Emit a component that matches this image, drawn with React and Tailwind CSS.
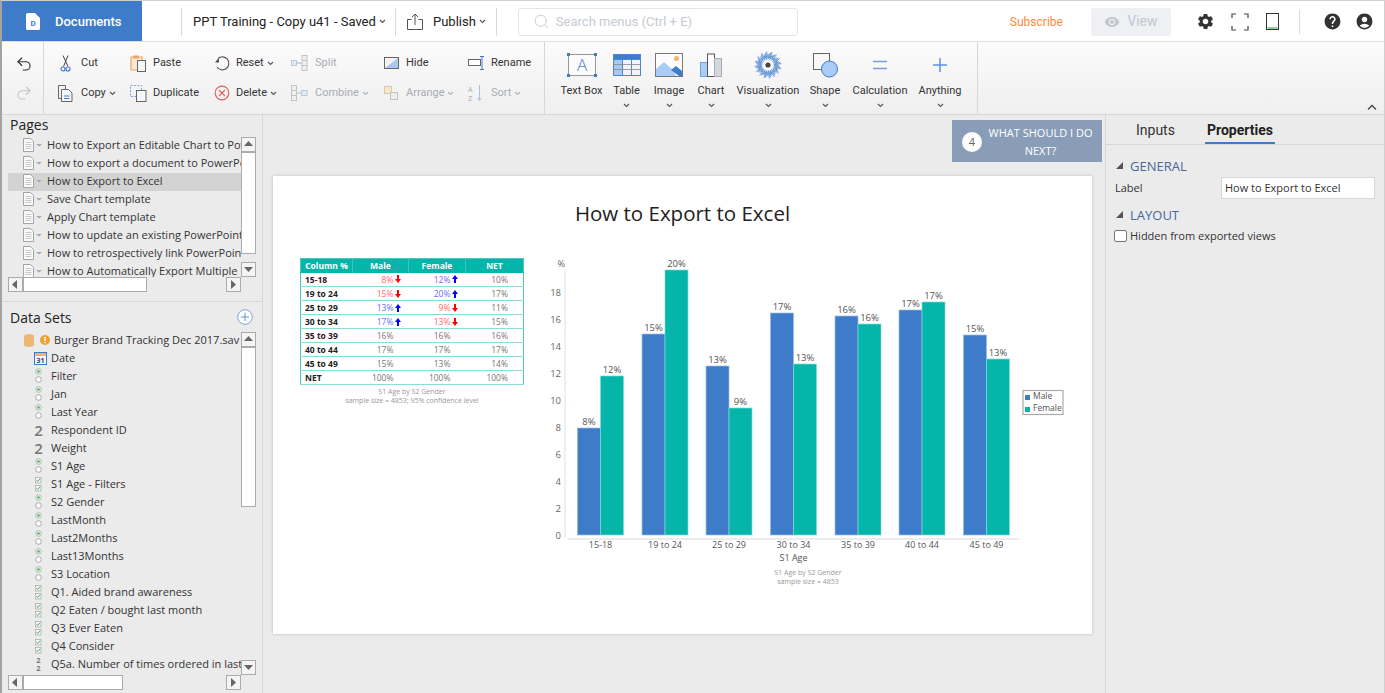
import React from 'react';
import { Undo2, Redo2, Search } from 'lucide-react';
import { MdSettings, MdHelp, MdAccountCircle, MdRemoveRedEye } from 'react-icons/md';

const Caret = ({ color = '#555' }) => (
  <svg width="7" height="5" viewBox="0 0 7 5" className="shrink-0"><path d="M1 1l2.5 2.5L6 1" fill="none" stroke={color} strokeWidth="1.1" /></svg>
);

const I = ({ w = 20, h = 20, children }) => <svg width={w} height={h} viewBox={`0 0 ${w} ${h}`} className="shrink-0">{children}</svg>;

const CutIcon = () => <I w={14} h={17}><path d="M6 0.500l5 11M11 0.500L6.500 11.500" stroke="#444" strokeWidth="1" fill="none"/><circle cx="6" cy="14" r="2" fill="none" stroke="#3e7cca" strokeWidth="1.200"/><circle cx="11" cy="14" r="2" fill="none" stroke="#3e7cca" strokeWidth="1.200"/></I>;
const PasteIcon = () => <I w={17} h={17}><path d="M1 2h11v13H1z" fill="#fbe9d3" stroke="#e9a868" strokeWidth="1.200"/><rect x="3" y="0.500" width="6" height="3" fill="#e9a868"/><rect x="7.500" y="5.500" width="8" height="11" fill="#f6f6f6" stroke="#666"/></I>;
const CopyIcon = () => <I w={17} h={17}><path d="M4 13.500H1.500V0.500h7V4" fill="none" stroke="#666"/><path d="M4.500 4.500h7l3.500 3.500v8.500H4.500z" fill="#f8f8f8" stroke="#666"/><path d="M7 11h5.500M7 13.500h5.500" stroke="#3e7cca"/></I>;
const DupIcon = () => <I w={17} h={17}><rect x="0.500" y="0.500" width="11" height="11" fill="none" stroke="#7aa6dc" strokeDasharray="2 1.400"/><rect x="6.500" y="5.500" width="9.500" height="11" fill="#f6f6f6" stroke="#666"/></I>;
const ResetIcon = () => <I w={16} h={16}><path d="M4 3.500A6.500 6.500 0 1 1 3 12" fill="none" stroke="#555" strokeWidth="1.100"/><path d="M1 7.500L5 2.500v5z" fill="#555"/></I>;
const DelIcon = () => <I w={16} h={16}><circle cx="8" cy="8" r="6.800" fill="none" stroke="#e0615c" strokeWidth="1.200"/><path d="M5 5l6 6M11 5l-6 6" stroke="#e0615c" strokeWidth="1.100"/></I>;
const SplitIcon = () => <I w={17} h={16}><rect x="0.500" y="5.500" width="5" height="5" fill="#e3eaf3" stroke="#b9cbe2"/><path d="M5 8h6" stroke="#9ab6d8"/><rect x="11" y="0.500" width="5" height="15" fill="#f0f0f0" stroke="#c4c4c4"/><path d="M11 5.500h5M11 10.500h5" stroke="#c4c4c4"/></I>;
const CombineIcon = () => <I w={17} h={16}><rect x="0.500" y="0.500" width="5" height="15" fill="#f0f0f0" stroke="#c4c4c4"/><path d="M0.500 5.500h5M0.500 10.500h5M5 8h6" stroke="#c4c4c4"/><rect x="10.500" y="5.500" width="5.500" height="5" fill="#e3eaf3" stroke="#b9cbe2"/></I>;
const HideIcon = () => <I w={15} h={12}><rect x="0.500" y="0.500" width="14" height="11" fill="#f4f4f4" stroke="#666"/><path d="M1 11L14 1v10z" fill="#a9c8f1"/></I>;
const RenameIcon = () => <I w={17} h={14}><rect x="0.500" y="3.500" width="12" height="6" fill="#fff" stroke="#666"/><path d="M12 0.500h4M14 0.500v13M12 13.500h4" stroke="#3e7cca" fill="none"/></I>;
const ArrangeIcon = () => <I w={14} h={14}><rect x="0.500" y="0.500" width="7" height="7" fill="#f7e6cc" stroke="#dcc9a8"/><rect x="6.500" y="6.500" width="7" height="7" fill="#eee" stroke="#c4c4c4"/></I>;
const SortIcon = () => <I w={16} h={18}><text x="0" y="8" fontSize="7" fill="#aaa" fontFamily="Roboto">A</text><text x="0" y="17" fontSize="7" fill="#aaa" fontFamily="Roboto">Z</text><path d="M11.500 1v15M9.500 14l2 2.500 2-2.500" stroke="#a9c0de" fill="none"/></I>;

const ribbonCols = [
  { w: 'w-[73px]', s: 'w-[24px]', items: [
    { l: 'Cut', i: <CutIcon /> }, { l: 'Copy', i: <CopyIcon />, c: 1 } ] },
  { w: 'w-[84px]', s: 'w-[23px]', items: [
    { l: 'Paste', i: <PasteIcon /> }, { l: 'Duplicate', i: <DupIcon /> } ] },
  { w: 'w-[77px]', s: 'w-[22px]', items: [
    { l: 'Reset', i: <ResetIcon />, c: 1 }, { l: 'Delete', i: <DelIcon />, c: 1 } ] },
  { w: 'w-[93px]', s: 'w-[24px]', items: [
    { l: 'Split', i: <SplitIcon />, d: 1 }, { l: 'Combine', i: <CombineIcon />, d: 1, c: 1 } ] },
  { w: 'w-[84px]', s: 'w-[22px]', items: [
    { l: 'Hide', i: <HideIcon /> }, { l: 'Arrange', i: <ArrangeIcon />, d: 1, c: 1 } ] },
  { w: 'w-[76px]', s: 'w-[23px]', items: [
    { l: 'Rename', i: <RenameIcon /> }, { l: 'Sort', i: <SortIcon />, d: 1, c: 1 } ] },
];

const burst = Array.from({ length: 64 }, (_, k) => {
  const a = (k / 64) * Math.PI * 2;
  const r1 = 5.500 + ((k * 7) % 3);
  const r2 = 10.500 + ((k * 5) % 4);
  return <line key={k} x1={14 + r1 * Math.cos(a)} y1={14 + r1 * Math.sin(a)} x2={14 + r2 * Math.cos(a)} y2={14 + r2 * Math.sin(a)} stroke="#3f7fd0" strokeWidth="0.800" />;
});

const inserts = [
  { l: 'Text Box', w: 'w-[47px]', i: (
    <I w={30} h={24}><rect x="1.500" y="1.500" width="27" height="21" fill="#fbfbfb" stroke="#999"/><text x="15" y="18" fontSize="17" textAnchor="middle" fill="#4a86d4" fontFamily="Open Sans" fontWeight="300">A</text>{[[0,0],[27,0],[0,21],[27,21]].map(([x,y],k)=><rect key={k} x={x} y={y} width="3" height="3" fill="#3e7cca"/>)}</I>) },
  { l: 'Table', w: 'w-[43px]', c: 1, i: (
    <I w={28} h={22}><rect width="28" height="22" fill="#4a86d4"/><rect x="1" y="1" width="26" height="4" fill="#3e7cca"/><rect x="1" y="6" width="8" height="15" fill="#a9c8f1"/><rect x="10" y="6" width="8" height="15" fill="#f3f3f3"/><rect x="19" y="6" width="8" height="15" fill="#f3f3f3"/><path d="M1 10.500h26M1 15.500h26" stroke="#888" strokeWidth="0.800"/></I>) },
  { l: 'Image', w: 'w-[42px]', c: 1, i: (
    <I w={28} h={24}><rect x="0.500" y="0.500" width="27" height="23" fill="#fdfdfd" stroke="#777"/><path d="M1 23V16l8-7 9 8 3 6z" fill="#a9cdf6"/><path d="M16 17l5-4 6 5v5h-3z" fill="#3e7cca"/><circle cx="21.500" cy="5.500" r="2.500" fill="#f3b36a"/></I>) },
  { l: 'Chart', w: 'w-[42px]', c: 1, i: (
    <I w={22} h={24}><rect x="0.500" y="9.500" width="7" height="14" fill="#a9cdf6" stroke="#6fa2e0"/><rect x="7.500" y="1" width="7" height="22.500" fill="#fff" stroke="#555"/><rect x="14.500" y="5.500" width="7" height="18" fill="#d3d8da" stroke="#aab"/></I>) },
  { l: 'Visualization', w: 'w-[72px]', c: 1, i: (
    <I w={28} h={28}>{burst}<ellipse cx="14" cy="14" rx="5.500" ry="4" fill="#fff"/><circle cx="14" cy="14" r="2.600" fill="#444"/></I>) },
  { l: 'Shape', w: 'w-[42px]', c: 1, i: (
    <I w={25} h={25}><rect x="0.500" y="0.500" width="16" height="16" fill="#f8f8f8" stroke="#666"/><circle cx="16.500" cy="16" r="8" fill="#a9cdf6" stroke="#3e7cca"/></I>) },
  { l: 'Calculation', w: 'w-[68px]', c: 1, i: (
    <I w={14} h={10}><path d="M0 1.500h14M0 8.500h14" stroke="#6fa2e0" strokeWidth="1.500"/></I>) },
  { l: 'Anything', w: 'w-[52px]', c: 1, i: (
    <I w={14} h={14}><path d="M0 7h14M7 0v14" stroke="#5b92da" strokeWidth="1.500"/></I>) },
];

const pages = ['How to Export an Editable Chart to PowerPoint', 'How to export a document to PowerPoint', 'How to Export to Excel', 'Save Chart template', 'Apply Chart template', 'How to update an existing PowerPoint document', 'How to retrospectively link PowerPoint', 'How to Automatically Export Multiple Pages'];

const RadioI = () => <I w={9} h={16}><circle cx="4.500" cy="3.500" r="2.800" fill="#eef5ee" stroke="#9db09d" strokeWidth="0.800"/><circle cx="4.500" cy="3.500" r="1.300" fill="#4fae6a"/><circle cx="4.500" cy="11.500" r="2.800" fill="#fff" stroke="#a8a8a8"/></I>;
const CheckI = () => <I w={9} h={16}><rect x="1.500" y="1.500" width="5.500" height="5.500" fill="#f4f4f4" stroke="#a8b4a8" strokeWidth="0.800"/><path d="M2.500 4.200l1.200 1.300 2.500-2.800" stroke="#3fa95c" strokeWidth="0.900" fill="none"/><rect x="1.500" y="9.500" width="5.500" height="5.500" fill="#f4f4f4" stroke="#a8b4a8" strokeWidth="0.800"/><path d="M2.500 12.200l1.200 1.300 2.500-2.800" stroke="#3fa95c" strokeWidth="0.900" fill="none"/></I>;
const NumI = () => <span className="w-[9px] text-[15px] leading-none font-semibold text-[#777] text-center">2</span>;
const Num2I = () => <span className="w-[9px] flex flex-col items-center text-[7.500px] leading-[8px] font-bold text-[#777]"><span>2</span><span>2</span></span>;
const DateI = () => <I w={13} h={14}><rect x="0.500" y="1.500" width="12" height="12" fill="#f5f8fc" stroke="#3e7cca"/><rect x="1" y="2" width="11" height="3" fill="#e6b873"/><text x="6.500" y="12" fontSize="7" textAnchor="middle" fontWeight="700" fill="#444" fontFamily="Open Sans">31</text></I>;

const vars = [
  ['Date', 'd'], ['Filter', 'r'], ['Jan', 'r'], ['Last Year', 'r'], ['Respondent ID', 'n'], ['Weight', 'n'], ['S1 Age', 'r'], ['S1 Age - Filters', 'c'], ['S2 Gender', 'r'], ['LastMonth', 'r'], ['Last2Months', 'r'], ['Last13Months', 'r'], ['S3 Location', 'r'], ['Q1. Aided brand awareness', 'c'], ['Q2 Eaten / bought last month', 'c'], ['Q3 Ever Eaten', 'c'], ['Q4 Consider', 'c'], ['Q5a. Number of times ordered in last month', 'm'],
];
const varIcon = { d: <DateI />, r: <RadioI />, n: <NumI />, c: <CheckI />, m: <Num2I /> };

const Btn = ({ dir }) => {
  const path = { up: 'M1 7l4.500-5L10 7z', down: 'M1 3l4.500 5L10 3z', left: 'M7 1L2 5.500 7 10z', right: 'M3 1l5 4.500L3 10z' }[dir];
  return (
    <div className="w-[15px] h-[15px] shrink-0 border border-[#ababab] bg-[#f4f4f4] flex items-center justify-center">
      <svg width="11" height="11" viewBox="0 0 11 11"><path d={path} fill="#666" /></svg>
    </div>
  );
};

const DocI = () => (
  <svg width="20" height="14" viewBox="0 0 20 14" className="shrink-0 overflow-visible">
    <path d="M0.500 0.500h7l3 3v10h-10z" fill="#fafafa" stroke="#a5a5a5" />
    <path d="M2.500 4.500h6M2.500 6.500h6M2.500 8.500h6M2.500 10.500h6" stroke="#bbb" strokeWidth="0.800" />
    <path d="M13 6h6l-3 2.500z" fill="#aaa" />
  </svg>
);

const bars = [
  { x: 577.500, m: 428, f: 376, lm: '8%', lf: '12%', c: '15-18' },
  { x: 642, m: 334, f: 270, lm: '15%', lf: '20%', c: '19 to 24' },
  { x: 706, m: 366, f: 408, lm: '13%', lf: '9%', c: '25 to 29' },
  { x: 770.500, m: 313, f: 364, lm: '17%', lf: '13%', c: '30 to 34' },
  { x: 835, m: 316, f: 324, lm: '16%', lf: '16%', c: '35 to 39' },
  { x: 899, m: 310, f: 302, lm: '17%', lf: '17%', c: '40 to 44' },
  { x: 963.500, m: 335, f: 359, lm: '15%', lf: '13%', c: '45 to 49' },
];

const Chart = () => (
  <svg width="530" height="340" viewBox="540 250 530 340" className="shrink-0 ml-[16px]" fontFamily="Open Sans">
    <path d="M565 270v268" stroke="#eaeaea" strokeWidth="1.500" />
    <path d="M568 539h451" stroke="#e6e6e6" strokeWidth="1.500" />
    <text x="565" y="266.500" fontSize="9" fill="#666" textAnchor="end">%</text>
    {[0, 2, 4, 6, 8, 10, 12, 14, 16, 18].map((v) => (
      <text key={v} x="561" y={538.500 - v * 13.450} fontSize="9.500" fill="#666" textAnchor="end">{v}</text>
    ))}
    {bars.map((b) => (
      <g key={b.c}>
        <rect x={b.x} y={b.m} width="23" height={535 - b.m} fill="#3e7cca" stroke="#9dbde6" strokeWidth="0.700" />
        <rect x={b.x + 23} y={b.f} width="23" height={535 - b.f} fill="#05b5aa" stroke="#7edcd5" strokeWidth="0.700" />
        <text x={b.x + 11.500} y={b.m - 3.500} fontSize="9.500" fill="#555" textAnchor="middle">{b.lm}</text>
        <text x={b.x + 34.500} y={b.f - 3.500} fontSize="9.500" fill="#555" textAnchor="middle">{b.lf}</text>
        <text x={b.x + 23} y="547.500" fontSize="9" fill="#555" textAnchor="middle">{b.c}</text>
      </g>
    ))}
    <text x="793.500" y="560.500" fontSize="9" fill="#555" textAnchor="middle">S1 Age</text>
    <text x="808" y="574.500" fontSize="7" fill="#999" textAnchor="middle">S1 Age by S2 Gender</text>
    <text x="808" y="583.500" fontSize="7" fill="#999" textAnchor="middle">sample size = 4853</text>
    <rect x="1023" y="390.500" width="40" height="24" fill="#fff" stroke="#aaa" strokeWidth="1.200" />
    <rect x="1025" y="395" width="5" height="5" fill="#3e7cca" />
    <rect x="1025" y="407" width="5" height="5" fill="#05b5aa" />
    <text x="1033" y="399" fontSize="8.500" fill="#555">Male</text>
    <text x="1033" y="411" fontSize="8.500" fill="#555">Female</text>
  </svg>
);

const Arrow = ({ up }) => (
  <svg width="6" height="8" viewBox="0 0 6 8" className="ml-[1px]">
    <path d={up ? 'M3 0l3 4H4v4H2V4H0z' : 'M3 8l3-4H4V0H2v4H0z'} fill={up ? '#0000ff' : '#ff0000'} />
  </svg>
);

const Cell = ({ v, a }) => (
  <td className="p-0">
    <div className={`flex justify-end items-center ${a === 'u' ? 'text-[#6a6aff]' : a === 'd' ? 'text-[#ff6a6a]' : 'text-[#777]'}`}>
      <span>{v}</span>
      <span className="w-[15px] flex items-center">{a && <Arrow up={a === 'u'} />}</span>
    </div>
  </td>
);

const rows = [
  ['15-18', ['8%', 'd'], ['12%', 'u'], ['10%']],
  ['19 to 24', ['15%', 'd'], ['20%', 'u'], ['17%']],
  ['25 to 29', ['13%', 'u'], ['9%', 'd'], ['11%']],
  ['30 to 34', ['17%', 'u'], ['13%', 'd'], ['15%']],
  ['35 to 39', ['16%'], ['16%'], ['16%']],
  ['40 to 44', ['17%'], ['17%'], ['17%']],
  ['45 to 49', ['15%'], ['13%'], ['14%']],
  ['NET', ['100%'], ['100%'], ['100%']],
];

const DataTable = () => (
  <div className="w-[224px] shrink-0 mt-[8px] font-['Open_Sans',sans-serif]">
    <table className="w-[223px] table-fixed border-collapse border border-[#4cc6be] text-[8.500px] leading-[13px]">
      <colgroup><col className="w-[52px]" /><col className="w-[56px]" /><col className="w-[57px]" /><col className="w-[58px]" /></colgroup>
      <thead>
        <tr className="h-[14px] bg-[#05b5aa] text-white font-bold">
          <th className="p-0 border-r border-[#3cc4bb] font-bold">Column %</th>
          <th className="p-0 border-r border-[#3cc4bb] font-bold">Male</th>
          <th className="p-0 border-r border-[#3cc4bb] font-bold">Female</th>
          <th className="p-0 font-bold">NET</th>
        </tr>
      </thead>
      <tbody>
        {rows.map((r) => (
          <tr key={r[0]} className="h-[14px] border-b border-[#8adcd5] bg-white">
            <td className="p-0 pl-[4px] font-bold text-[#222]">{r[0]}</td>
            <Cell v={r[1][0]} a={r[1][1]} />
            <Cell v={r[2][0]} a={r[2][1]} />
            <Cell v={r[3][0]} a={r[3][1]} />
          </tr>
        ))}
      </tbody>
    </table>
    <div className="text-center text-[7px] leading-[9px] text-[#999] mt-[2px]">
      <div>S1 Age by S2 Gender</div>
      <div>sample size = 4853; 95% confidence level</div>
    </div>
  </div>
);

export default function App() {
  return (
    <div className="w-[1385px] h-[693px] overflow-hidden flex flex-col border-t border-t-[#cfcfcf] border-l-2 border-l-[#a3a3a3] border-r border-r-[#cfcfcf] bg-white font-['Roboto',sans-serif] text-[#222]">
      <header className="h-[41px] shrink-0 flex items-center border-b border-[#dcdfe0] bg-white pt-[1px]">
        <div className="w-[140px] -mt-[1px] h-[40px] bg-[#3e7cca] flex items-center pl-[24px] pt-[1px] text-white text-[13px] font-medium">
          <svg width="14" height="17" viewBox="0 0 14 17" className="mr-[15px]"><path d="M0 1.500A1.500 1.500 0 0 1 1.500 0H9l5 5v10.500a1.500 1.500 0 0 1-1.500 1.500h-11A1.500 1.500 0 0 1 0 15.500z" fill="#fff" /><text x="7" y="13" fontSize="8" fontWeight="700" fill="#3e7cca" textAnchor="middle" fontFamily="Roboto">D</text></svg>
          Documents
        </div>
        <div className="w-px h-[28px] bg-[#d9d9d9] ml-[39px]" />
        <div className="ml-[11px] w-[202px] flex items-center gap-[3px] text-[13px]">PPT Training - Copy u41 - Saved <Caret /></div>
        <div className="w-px h-[28px] bg-[#d9d9d9]" />
        <svg width="16" height="17" viewBox="0 0 16 17" className="ml-[11px]"><path d="M4.500 6.500h-4v10h15v-10h-4" fill="none" stroke="#555" /><path d="M8 12V1M5 4l3-3 3 3" fill="none" stroke="#555" /></svg>
        <span className="ml-[10px] text-[13px]">Publish</span>
        <span className="ml-[3px]"><Caret /></span>
        <div className="w-px h-[28px] bg-[#d9d9d9] ml-[10px]" />
        <div className="ml-[21px] w-[280px] h-[28px] border border-[#e4e6ec] rounded-[3px] flex items-center pl-[14px] gap-[6px] text-[13px] text-[#c6cad3]">
          <Search size={17} strokeWidth={1.300} />Search menus (Ctrl + E)
        </div>
        <span className="ml-[212px] text-[12px] text-[#ff8a3d]">Subscribe</span>
        <div className="ml-[28px] w-[80px] h-[28px] rounded-[3px] bg-[#eff0f4] flex items-center justify-center gap-[7px] text-[14px] text-[#c2c7d1]">
          <MdRemoveRedEye size={16} />View
        </div>
        <MdSettings size={19} className="ml-[25px] text-[#333]" />
        <svg width="18" height="18" viewBox="0 0 18 18" className="ml-[16px]"><path d="M1 5V1h4M13 1h4v4M17 13v4h-4M5 17H1v-4" fill="none" stroke="#444" strokeWidth="1.200" /></svg>
        <svg width="13" height="17" viewBox="0 0 13 17" className="ml-[17px]"><rect x="0.500" y="0.500" width="12" height="16" fill="none" stroke="#333" /><path d="M1.500 15h10" stroke="#3fb34f" strokeWidth="1.200" /></svg>
        <div className="w-px h-[24px] bg-[#d9d9d9] ml-[20px]" />
        <MdHelp size={19} className="ml-[23px] text-[#333]" />
        <MdAccountCircle size={19} className="ml-[13px] text-[#333]" />
      </header>

      <div className="h-[73px] shrink-0 flex border-b border-[#d5d8d8] bg-linear-to-b from-[#fdfbfc] to-[#efefef] relative">
        <div className="w-[42px] shrink-0 border-r border-[#d5d8d8] flex flex-col items-center pt-[13px] gap-[11px] pl-[2px]">
          <Undo2 size={18} strokeWidth={1.500} className="text-[#333]" />
          <Redo2 size={18} strokeWidth={1.500} className="text-[#c4c4c4]" />
        </div>
        <div className="w-[501px] shrink-0 border-r border-[#d5d8d8] flex pl-[13px] pt-[6px] text-[11px]">
          {ribbonCols.map((col, k) => (
            <div key={k} className={`${col.w} shrink-0 flex flex-col`}>
              {col.items.map((it) => (
                <div key={it.l} className={`h-[30px] flex items-center ${it.d ? 'text-[#a9adb3]' : 'text-[#333]'}`}>
                  <span className={`${col.s} shrink-0 flex items-center`}>{it.i}</span>
                  <span>{it.l}</span>
                  {it.c && <span className="ml-[3px]"><Caret color={it.d ? '#b5b5b5' : '#555'} /></span>}
                </div>
              ))}
            </div>
          ))}
        </div>
        <div className="w-[433px] shrink-0 border-r border-[#d5d8d8] flex pl-[13px] pt-[9px] text-[11px] text-[#333]">
          {inserts.map((it) => (
            <div key={it.l} className={`${it.w} shrink-0 flex flex-col items-center`}>
              <div className="h-[28px] flex items-center justify-center">{it.i}</div>
              <div className="h-[16px] mt-[4px] leading-[16px] whitespace-nowrap">{it.l}</div>
              <div className="h-[12px] flex items-center justify-center">{it.c && <Caret />}</div>
            </div>
          ))}
        </div>
        <svg width="10" height="7" viewBox="0 0 10 7" className="absolute right-[7px] bottom-[3px]"><path d="M1 5.500L5 1.500 9 5.500" fill="none" stroke="#444" strokeWidth="1.300" /></svg>
      </div>

      <main className="flex-1 min-h-0 flex bg-[#ebebeb] font-['Open_Sans',sans-serif]">
        <aside className="w-[261px] shrink-0 border-r border-[#d5d8d8] flex flex-col text-[11px] text-[#333]">
          <div className="h-[187px] shrink-0 border-b border-[#d8d8d8] pl-[6px]">
            <div className="h-[22px] pl-[2px] text-[14px] leading-[20px] text-[#222]">Pages</div>
            <div className="flex">
              <div className="w-[233px] h-[140px] overflow-hidden">
                {pages.map((p, k) => (
                  <div key={p} className={`h-[18px] flex items-center pl-[15px] pb-[2px] gap-[4px] whitespace-nowrap overflow-hidden ${k === 2 ? 'bg-[#d3d3d3]' : ''}`}>
                    <DocI /><span>{p}</span>
                  </div>
                ))}
              </div>
              <div className="w-[15px] h-[140px] flex flex-col">
                <Btn dir="up" />
                <div className="h-[102px] bg-white border border-[#ababab]" />
                <div className="flex-1" />
                <Btn dir="down" />
              </div>
            </div>
            <div className="flex w-[233px]">
              <Btn dir="left" />
              <div className="w-[124px] bg-white border border-[#ababab]" />
              <div className="flex-1" />
              <Btn dir="right" />
            </div>
          </div>
          <div className="flex-1 pl-[6px]">
            <div className="h-[30px] flex items-center justify-between pr-[9px] pl-[2px] text-[14px] text-[#222]">
              <span>Data Sets</span>
              <svg width="16" height="16" viewBox="0 0 16 16"><circle cx="8" cy="8" r="7.300" fill="#fff" stroke="#7aa6dc" /><path d="M4 8h8M8 4v8" stroke="#5b92da" /></svg>
            </div>
            <div className="flex">
              <div className="w-[233px] h-[343px] overflow-hidden">
                <div className="h-[18px] flex items-center pl-[16px] pb-[2px] whitespace-nowrap">
                  <svg width="10" height="13" viewBox="0 0 10 13"><path d="M0 2c0-2.500 10-2.500 10 0v9c0 2.500-10 2.500-10 0z" fill="#ecb673" /></svg>
                  <svg width="10" height="10" viewBox="0 0 10 10" className="ml-[6px]"><circle cx="5" cy="5" r="5" fill="#eda232" /><path d="M5 2v4M5 7v1.300" stroke="#fff" strokeWidth="1.400" /></svg>
                  <span className="ml-[4px]">Burger Brand Tracking Dec 2017.sav</span>
                </div>
                {vars.map(([l, t]) => (
                  <div key={l} className="h-[18px] flex items-center pb-[2px] whitespace-nowrap overflow-hidden pl-[26px]">
                    <span className="w-[17px] shrink-0 flex justify-start">{varIcon[t]}</span>
                    <span>{l}</span>
                  </div>
                ))}
              </div>
              <div className="w-[15px] h-[343px] flex flex-col">
                <Btn dir="up" />
                <div className="h-[160px] bg-white border border-[#ababab]" />
                <div className="flex-1" />
                <Btn dir="down" />
              </div>
            </div>
            <div className="flex w-[233px]">
              <Btn dir="left" />
              <div className="w-[100px] bg-white border border-[#ababab]" />
              <div className="flex-1" />
              <Btn dir="right" />
            </div>
          </div>
        </aside>

        <section className="w-[843px] shrink-0 border-r border-[#d3d8d8] pt-[5px] flex flex-col">
          <div className="flex justify-end pr-[3px]">
            <div className="w-[150px] h-[42px] bg-[#8a9db8] flex items-center pl-[10px] pt-[1px] text-white text-[11px] leading-[18px]">
              <span className="w-[20px] h-[20px] rounded-full bg-white text-[#666] text-[11px] flex items-center justify-center shrink-0">4</span>
              <span className="flex-1 text-center pr-[3px]">WHAT SHOULD I DO NEXT?</span>
            </div>
          </div>
          <div className="mt-[14px] ml-[10px] w-[819px] h-[458px] bg-white shadow-[0_0_3px_rgba(0,0,0,0.2)]">
            <div className="pt-[23px] h-[52px] text-center text-[20.500px] leading-[28px] text-[#222]">How to Export to Excel</div>
            <div className="flex items-start mt-[22px] ml-[27px]">
              <DataTable />
              <Chart />
            </div>
          </div>
        </section>

        <aside className="flex-1 min-w-0 text-[11px] text-[#333]">
          <div className="h-[30px] border-b border-[#d3d8d8] flex items-end pl-[30px] font-['Roboto',sans-serif] text-[14px]">
            <span className="h-[30px] leading-[32px] text-[#333]">Inputs</span>
            <span className="ml-[30px] h-[30px] leading-[32px] px-[2px] font-bold text-[#222] border-b-2 border-[#3e7cca]">Properties</span>
          </div>
          <div className="pl-[9px] pr-[9px]">
            <div className="h-[32px] flex items-end pb-[2px] gap-[7px] text-[13px] leading-[18px] text-[#48689c] pl-[1px]">
              <svg width="7" height="7" viewBox="0 0 7 7" className="mb-[6px]"><path d="M7 0v7H0z" fill="#555" /></svg>GENERAL
            </div>
            <div className="flex items-center h-[22px]">
              <span className="w-[106px]">Label</span>
              <span className="w-[154px] h-[22px] bg-white border border-[#d6d6d6] pl-[3px] leading-[20px]">How to Export to Excel</span>
            </div>
            <div className="h-[25px] flex items-end gap-[7px] text-[13px] leading-[18px] text-[#48689c] pl-[1px]">
              <svg width="7" height="7" viewBox="0 0 7 7" className="mb-[6px]"><path d="M7 0v7H0z" fill="#555" /></svg>LAYOUT
            </div>
            <div className="flex items-center h-[14px] mt-[5px] gap-[3px] -ml-[1px]">
              <span className="w-[13px] h-[12px] bg-white border border-[#777] rounded-[2px]" />
              Hidden from exported views
            </div>
          </div>
        </aside>
      </main>
    </div>
  );
}
